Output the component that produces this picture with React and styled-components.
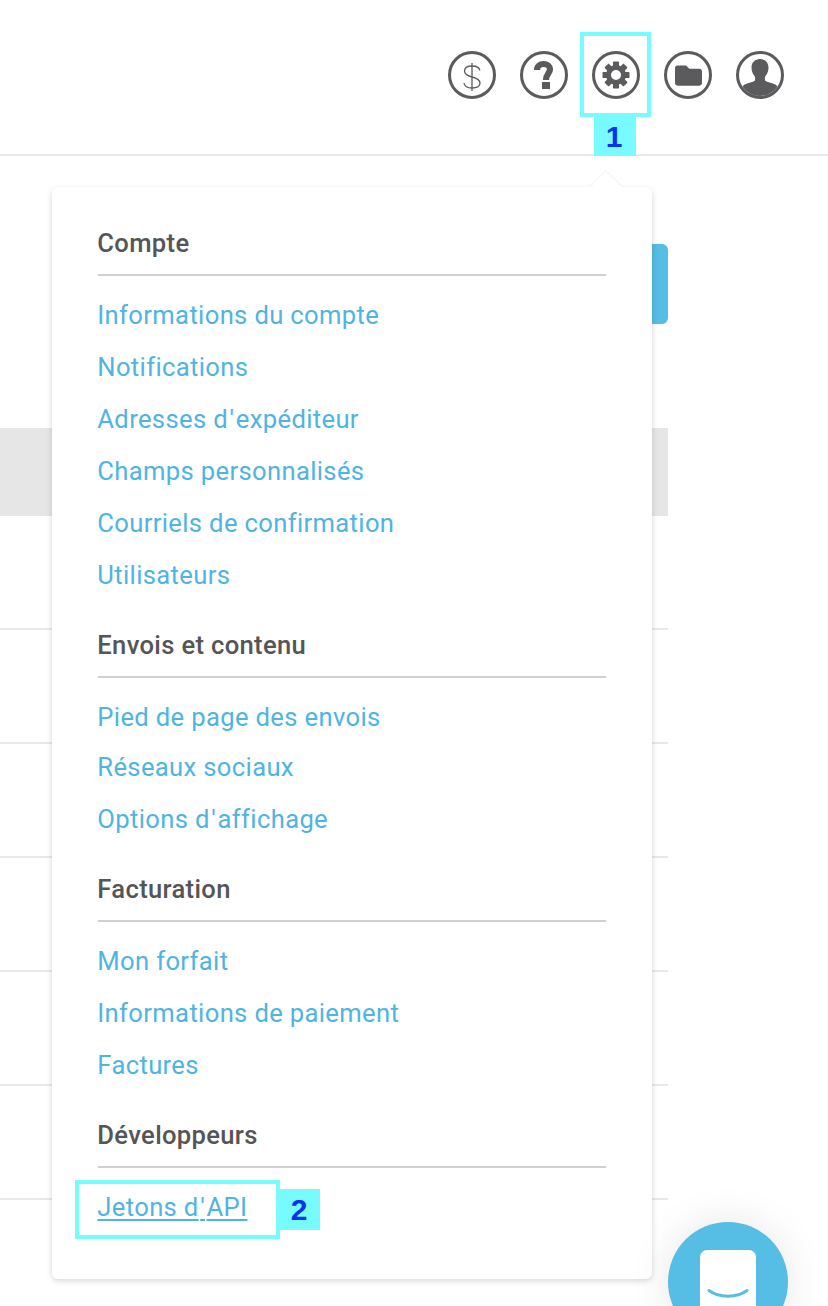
import React from "react";
import styled, { createGlobalStyle } from "styled-components";
import { FaFolder } from "react-icons/fa";

const Global = createGlobalStyle`
  html, body { margin: 0; padding: 0; background: #fff; }
  body { font-family: Roboto, "Liberation Sans", sans-serif; }
`;

const Page = styled.div`
  position: relative;
  width: 828px;
  height: 1306px;
  overflow: hidden;
  background: #fff;
`;

const Header = styled.header`
  box-sizing: border-box;
  height: 156px;
  padding: 51px 44px 0 0;
  display: flex;
  justify-content: flex-end;
  gap: 24px;
  border-bottom: 2px solid #e8e8e8;
`;

const IconCircle = styled.span`
  box-sizing: border-box;
  width: 48px;
  height: 48px;
  border: 3px solid #5b5b5d;
  border-radius: 50%;
  color: #5b5b5d;
  display: flex;
  align-items: center;
  justify-content: center;
  overflow: hidden;
`;

const Main = styled.main`
  width: 668px;
  padding-top: 88px;
  display: flex;
  flex-direction: column;
`;

const CreateButton = styled.div`
  align-self: flex-end;
  width: 200px;
  height: 80px;
  background: #56bde4;
  border-radius: 6px;
`;

const TableHead = styled.div`
  height: 88px;
  margin-top: 104px;
  background: #e6e6e6;
`;

const TableRow = styled.div`
  box-sizing: border-box;
  height: 114px;
  border-bottom: 2px solid #e8e8e8;
`;

const Menu = styled.nav`
  position: absolute;
  box-sizing: border-box;
  left: 52px;
  top: 187px;
  width: 600px;
  height: 1092px;
  padding: 40px 46px 46px;
  background: #fff;
  border-radius: 6px;
  box-shadow: 0 2px 6px rgba(0, 0, 0, 0.16);

  &::before {
    content: "";
    position: absolute;
    left: 543px;
    top: -11px;
    width: 22px;
    height: 22px;
    background: #fff;
    transform: rotate(45deg);
    box-shadow: -1px -1px 2px rgba(0, 0, 0, 0.05);
  }
`;

const Section = styled.section`
  position: relative;
  & + & { margin-top: 28px; }
`;

const Heading = styled.h3`
  box-sizing: content-box;
  margin: 0 0 13px;
  height: 32px;
  padding-bottom: 15px;
  border-bottom: 2px solid #d0d0d0;
  font-size: 25.6px;
  font-weight: 500;
  line-height: 32px;
  letter-spacing: 0.33px;
  text-indent: -0.7px;
  color: #555557;
`;

const LinkList = styled.ul`
  margin: 0;
  padding: 0;
  list-style: none;
  text-indent: -0.7px;
`;

const LinkItem = styled.li`
  height: ${(p) => (p.$short ? 50 : 52)}px;
  line-height: 52px;
`;

const MenuLink = styled.a`
  font-size: 25.6px;
  letter-spacing: 0.35px;
  color: #4fb4e1;
  text-decoration: ${(p) => (p.$active ? "underline" : "none")};
  text-decoration-thickness: 2px;
  text-underline-offset: 3px;
`;

const Apostrophe = styled.span`
  padding: 0 1.5px;
`;

const Highlight = styled.div`
  position: absolute;
  box-sizing: border-box;
  left: ${(p) => p.$x}px;
  top: ${(p) => p.$y}px;
  width: ${(p) => p.$w}px;
  height: ${(p) => p.$h}px;
  border: 4px solid #77fbfe;
`;

const Badge = styled.div`
  position: absolute;
  box-sizing: border-box;
  left: ${(p) => p.$x}px;
  top: ${(p) => p.$y}px;
  width: ${(p) => p.$w}px;
  height: ${(p) => p.$h}px;
  padding-right: 2px;
  background: #77fbfe;
  color: #0a33f0;
  font-family: "Liberation Sans", Arial, sans-serif;
  font-weight: 700;
  font-size: 30px;
  display: flex;
  align-items: center;
  justify-content: center;
`;

const ChatBubble = styled.div`
  position: absolute;
  left: 668px;
  top: 1222px;
  width: 120px;
  height: 120px;
  border-radius: 50%;
  background: #56bde4;
  box-shadow: 0 0 40px rgba(0, 0, 0, 0.1);
  display: flex;
  justify-content: center;
  padding-top: 28px;
  box-sizing: border-box;
`;

const ChatFace = styled.div`
  width: 56px;
  height: 80px;
  background: #fff;
  border-radius: 7px;
  display: flex;
  justify-content: center;
  padding-top: 38px;
  box-sizing: border-box;
`;

const DollarGlyph = () => (
  <svg width="42" height="42" viewBox="0 0 42 42" fill="none" stroke="currentColor" strokeWidth="1.300">
    <path d="M21 9v28" />
    <path d="M28.800 16.500C28.300 13.500 25.500 12 21 12C16.500 12 13.500 14 13.500 17C13.500 20.500 16.500 21.800 21 23C25.500 24.200 29 25.500 29 29C29 32.500 25.500 34 21 34C16.500 34 13.500 32.500 13 29" />
  </svg>
);

const QuestionGlyph = () => (
  <svg width="42" height="42" viewBox="0 0 42 42">
    <path d="M14 16C14 12 17 10 20.500 10C24.500 10 27 12.300 27 15.200C27 19.500 23 19.800 23 26" fill="none" stroke="currentColor" strokeWidth="6.200" />
    <rect x="19" y="28" width="8" height="7" fill="currentColor" />
  </svg>
);

const GearGlyph = () => (
  <svg width="42" height="42" viewBox="0 0 42 42" fill="currentColor">
    <circle cx="21" cy="21" r="7.500" fill="none" stroke="currentColor" strokeWidth="5" />
    {[0, 45, 90, 135, 180, 225, 270, 315].map((a) => (
      <rect key={a} x="18" y="7.500" width="6" height="5.500" rx="0.800" transform={`rotate(${a} 21 21)`} />
    ))}
  </svg>
);

const UserGlyph = () => (
  <svg width="42" height="42" viewBox="0 0 42 42" fill="currentColor">
    <path d="M21 5c-5 0-8.500 3.500-8.500 8.500 0 3.500 1.200 6.500 3 8.500.5.600.6 1.200.6 2v1.500c0 .9-.5 1.500-1.500 1.900-3 1-6.800 2-9 3.200C3.500 32 2 34 1 37v5h40v-5c-1-3-2.500-5-4.600-6.400-2.200-1.200-6-2.200-9-3.200-1-.4-1.500-1-1.500-1.900V24c0-.8.100-1.500.6-2 1.800-2 3-5 3-8.500C29.500 8.500 26 5 21 5z" />
  </svg>
);

const Smile = () => (
  <svg width="42" height="12" viewBox="0 0 42 12" fill="none">
    <path d="M2 2.500C12 10 30 10 40 2.500" stroke="#56bde4" strokeWidth="3" strokeLinecap="round" />
  </svg>
);

const sections = [
  { title: "Compte", links: ["Informations du compte", "Notifications", "Adresses d'expéditeur", "Champs personnalisés", "Courriels de confirmation", "Utilisateurs"] },
  { title: "Envois et contenu", links: ["Pied de page des envois", "Réseaux sociaux", "Options d'affichage"], short: 0 },
  { title: "Facturation", links: ["Mon forfait", "Informations de paiement", "Factures"] },
  { title: "Développeurs", links: ["Jetons d'API"], active: 0 },
];

const LinkText = ({ text }) => {
  const [before, after] = text.split("'");
  if (after === undefined) return text;
  return (
    <>
      {before}
      <Apostrophe>'</Apostrophe>
      {after}
    </>
  );
};

export default function App() {
  return (
    <Page>
      <Global />
      <Header>
        <IconCircle><DollarGlyph /></IconCircle>
        <IconCircle><QuestionGlyph /></IconCircle>
        <IconCircle><GearGlyph /></IconCircle>
        <IconCircle><FaFolder size={27} /></IconCircle>
        <IconCircle><UserGlyph /></IconCircle>
      </Header>
      <Main>
        <CreateButton />
        <TableHead />
        {[0, 1, 2, 3, 4, 5].map((i) => <TableRow key={i} />)}
      </Main>
      <Menu>
        {sections.map((s) => (
          <Section key={s.title}>
            <Heading>{s.title}</Heading>
            <LinkList>
              {s.links.map((l, i) => (
                <LinkItem key={l} $short={s.short === i}>
                  <MenuLink $active={s.active === i}><LinkText text={l} /></MenuLink>
                </LinkItem>
              ))}
            </LinkList>
          </Section>
        ))}
      </Menu>
      <Highlight $x={580} $y={32} $w={71} $h={85} />
      <Badge $x={594} $y={117} $w={42} $h={39}>1</Badge>
      <Highlight $x={75} $y={1180} $w={205} $h={59} />
      <Badge $x={280} $y={1189} $w={40} $h={41}>2</Badge>
      <ChatBubble>
        <ChatFace><Smile /></ChatFace>
      </ChatBubble>
    </Page>
  );
}
